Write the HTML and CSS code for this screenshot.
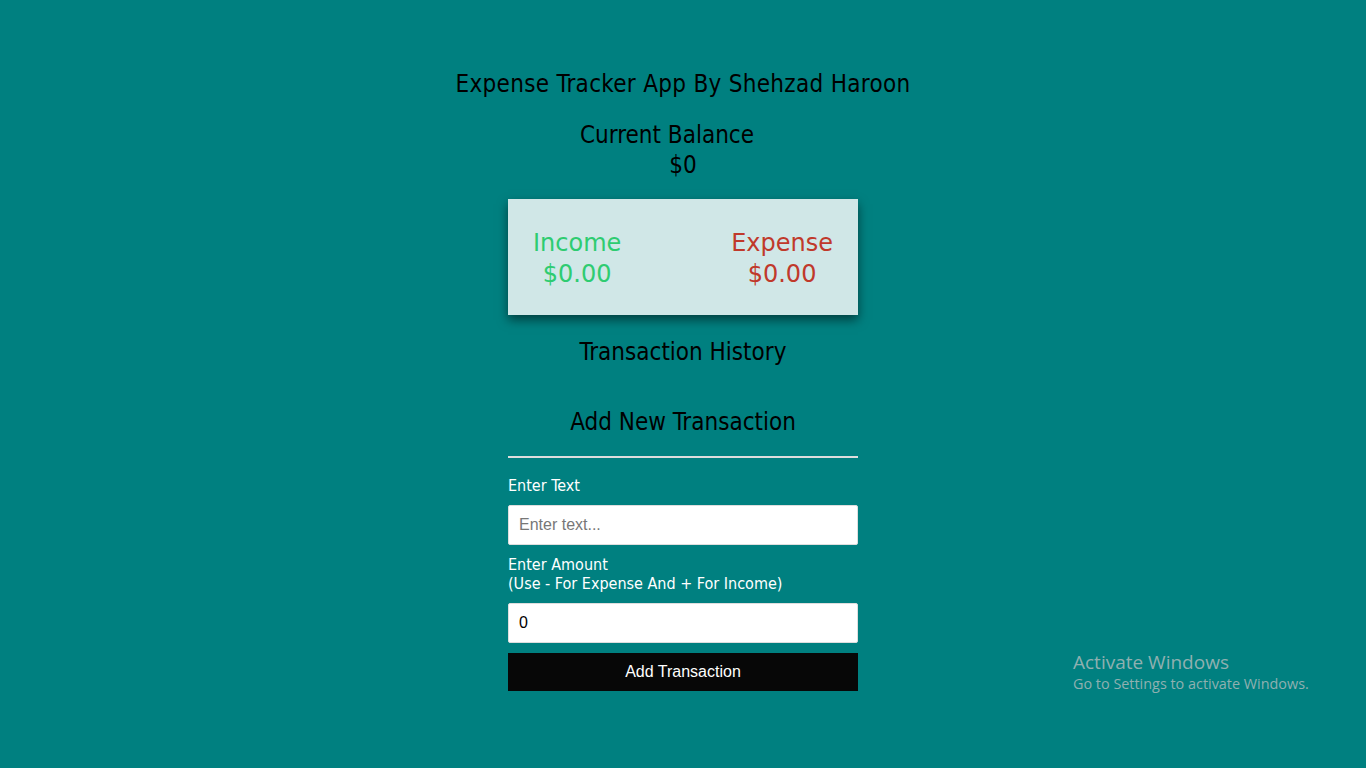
FILE: index.html
```html
<!DOCTYPE html>
<html lang="en">
<head>
  <meta charset="UTF-8">
  <title>Expense Tracker</title>
  <link rel="stylesheet" href="styles.css">
</head>
<body>

  <h2 class="app-title">Expense Tracker App By Shehzad Haroon</h2>

  <div class="container">
    <div class="balance">
      <h4>Current Balance</h4>
      <h1 id="balance">$0</h1>
    </div>

    <div class="inc-exp-container">
      <div class="money-block">
        <h4>Income</h4>
        <p id="money-plus" class="money plus">$0.00</p>
      </div>
      <div class="money-block">
        <h4 class="minus">Expense</h4>
        <p id="money-minus" class="money minus">$0.00</p>
      </div>
    </div>

    <h3 class="section-title">Transaction History</h3>
    <ul id="list" class="list"></ul>

    <h3 class="section-title add-title">Add New Transaction</h3>
    <form id="form">
      <div class="form-control">
        <label for="text">Enter Text</label>
        <input type="text" id="text" placeholder="Enter text...">
      </div>
      <div class="form-control amount-control">
        <label for="amount">Enter Amount <br>(Use - For Expense And + For Income)</label>
        <input type="number" id="amount" value="0">
      </div>
      <button class="btn">Add Transaction</button>
    </form>
  </div>

  <div class="activate">
    <div class="activate-big">Activate Windows</div>
    <div>Go to Settings to activate Windows.</div>
  </div>

</body>
</html>
```

FILE: styles.css
```css
body {
  margin: 0;
  background: #008080;
  font-family: Tahoma, "DejaVu Sans", sans-serif;
  font-stretch: condensed;
  color: #000;
}

.app-title {
  text-align: center;
  font-size: 24px;
  font-weight: normal;
  margin: 0;
  padding-top: 69px;
  line-height: 30px;
  letter-spacing: 0.3px;
}

.container {
  width: 350px;
  margin: 0 auto;
}

.balance {
  text-align: center;
  margin-top: 21px;
}

.balance h4 {
  font-size: 24px;
  font-weight: normal;
  margin: 0;
  line-height: 30px;
  padding-right: 32px;
}

.balance h1 {
  font-size: 24px;
  font-weight: normal;
  margin: 0;
  line-height: 30px;
}

.inc-exp-container {
  background: #d0e7e7;
  box-shadow: 0 5px 10px rgba(0, 0, 0, 0.5);
  display: flex;
  justify-content: space-between;
  padding: 29px 25px 25px;
  margin-top: 19px;
  font-stretch: normal;
}

.money-block {
  text-align: center;
}

.money-block h4 {
  margin: 0;
  font-size: 24px;
  font-weight: normal;
  line-height: 31px;
  color: #2ecc71;
}

.money {
  margin: 0;
  font-size: 24px;
  line-height: 31px;
}

.plus {
  color: #2ecc71;
}

.money-block .minus,
.minus {
  color: #c0392b;
}

.section-title {
  text-align: center;
  font-size: 24px;
  font-weight: normal;
  margin: 22px 0 0;
  line-height: 30px;
}

.list {
  margin: 0;
  padding: 0;
  list-style: none;
  height: 40px;
}

.add-title {
  margin-top: 0;
  padding-bottom: 19px;
  border-bottom: 2px solid #ddd;
}

.form-control {
  margin-top: 18px;
}

.amount-control {
  margin-top: 10px;
}

.form-control label {
  display: block;
  color: #fff;
  font-size: 16px;
  line-height: 19px;
  margin-bottom: 10px;
}

.form-control input {
  display: block;
  box-sizing: border-box;
  width: 100%;
  height: 40px;
  border: 1px solid #dedede;
  border-radius: 2px;
  padding: 10px;
  font-family: "Liberation Sans", Arial, sans-serif;
  font-size: 16px;
}

.form-control input::placeholder {
  color: #777;
}

.btn {
  display: block;
  width: 100%;
  height: 38px;
  margin-top: 10px;
  border: none;
  background: #070707;
  color: #fff;
  font-family: "Liberation Sans", Arial, sans-serif;
  font-size: 16px;
  cursor: pointer;
}

.activate {
  position: absolute;
  left: 1073px;
  top: 650px;
  color: #8fb0b0;
  font-family: "Open Sans", sans-serif;
  font-stretch: normal;
  font-size: 14.4px;
  line-height: 20px;
}

.activate-big {
  font-size: 19px;
  line-height: 24px;
}
```
